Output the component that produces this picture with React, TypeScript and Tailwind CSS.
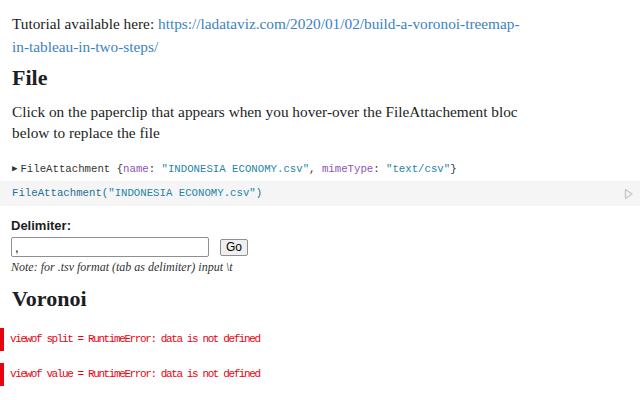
import React from 'react';

const serif = { fontFamily: '"Liberation Serif", serif' };
const mono = { fontFamily: '"Liberation Mono", monospace' };

export default function App() {
    return (
        <div className="w-[640px] h-[400px] overflow-hidden bg-white text-[#1b1e23]">
            <div className="pl-3 pt-[12px]" style={serif}>
                <p className="text-[15.3px] leading-[23px] w-[520px]">
                    Tutorial available here:{' '}
                    <a className="text-[#3b82c4]" href="#">
                        https://ladataviz.com/2020/01/02/build-a-voronoi-treemap-in-tableau-in-two-steps/
                    </a>
                </p>
                <h2 className="text-[22px] font-bold leading-[30px] mt-[5px]">File</h2>
                <p className="text-[15.3px] leading-[21px] mt-[8px] w-[520px]">
                    Click on the paperclip that appears when you hover-over the FileAttachement bloc below to
                    replace the file
                </p>
            </div>

            <div className="pl-3 mt-[19px] text-[10.7px] leading-[14px] text-[#333] flex items-center" style={mono}>
                <span className="text-[9px] mr-[3px]">▶</span>
                <span>
                    FileAttachment {'{'}
                    <span className="text-[#8b55b5]">name</span>: <span className="text-[#1e84a8]">"INDONESIA ECONOMY.csv"</span>,{' '}
                    <span className="text-[#8b55b5]">mimeType</span>: <span className="text-[#1e84a8]">"text/csv"</span>
                    {'}'}
                </span>
            </div>

            <div className="mt-[5px] h-[25px] bg-[#f5f5f5] flex items-center justify-between pl-3 pr-[6px]">
                <span className="text-[10.7px] text-[#1e6f94]" style={mono}>
                    FileAttachment(<span className="text-[#1e84a8]">"INDONESIA ECONOMY.csv"</span>)
                </span>
                <svg width="10" height="12" viewBox="0 0 10 12">
                    <path d="M1.5 1.5 L8 6 L1.5 10.5 Z" fill="none" stroke="#c8c8c8" strokeWidth="1.4" strokeLinejoin="round" />
                </svg>
            </div>

            <div className="pl-[11px] mt-[12px]" style={{ fontFamily: '"Liberation Sans", sans-serif' }}>
                <div className="text-[13px] font-bold leading-[16px]">Delimiter:</div>
                <div className="flex items-center gap-[11px] mt-[3px]">
                    <input
                        readOnly
                        value=","
                        className="w-[198px] h-[20px] border border-[#8f8f8f] rounded-[2px] px-[3px] text-[13px] text-black"
                    />
                    <button className="h-[17px] px-[5px] border border-[#8f8f8f] rounded-[2px] bg-[#efefef] text-[12px] leading-[14px] text-black">
                        Go
                    </button>
                </div>
                <div className="text-[12px] italic leading-[16px] mt-[2px] text-[#333]" style={serif}>
                    Note: for .tsv format (tab as delimiter) input \t
                </div>
            </div>

            <h2 className="pl-3 text-[22px] font-bold leading-[30px] mt-[9px]" style={serif}>Voronoi</h2>

            <div className="mt-[14px] flex flex-col gap-[12px]">
                <div className="h-[23px] border-l-[4px] border-[#e7040f] flex items-center pl-[6px]">
                    <span className="text-[11px] tracking-[-1.4px] text-[#e7040f]" style={mono}>
                        viewof split = RuntimeError: data is not defined
                    </span>
                </div>
                <div className="h-[23px] border-l-[4px] border-[#e7040f] flex items-center pl-[6px]">
                    <span className="text-[11px] tracking-[-1.4px] text-[#e7040f]" style={mono}>
                        viewof value = RuntimeError: data is not defined
                    </span>
                </div>
            </div>
        </div>
    );
}
